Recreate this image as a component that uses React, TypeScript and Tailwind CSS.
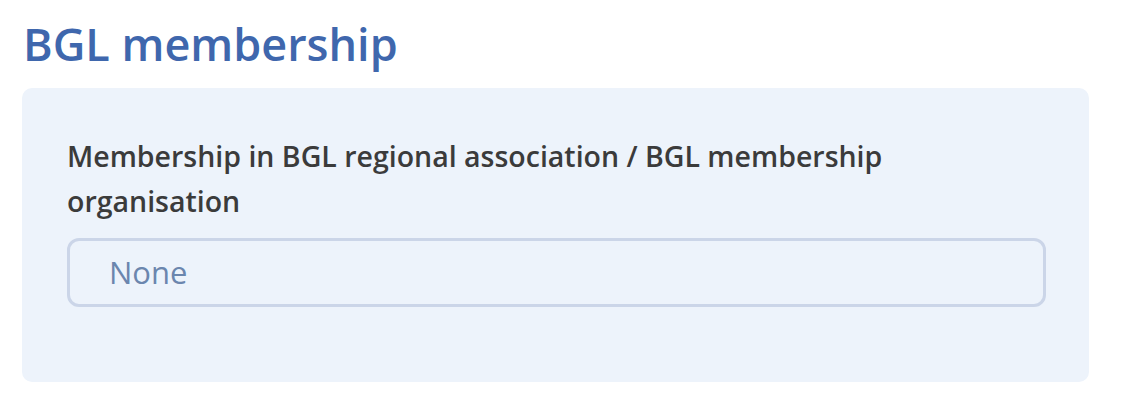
export default function App() {
  return (
    <div className="w-[1130px] h-[416px] bg-white px-[22px] pt-[14px] font-['Open_Sans',sans-serif]">
      <h1 className="text-[45px] leading-[60px] font-semibold text-[#3f67ad] pl-[1px]">BGL membership</h1>
      <div className="mt-[14px] w-[1067px] h-[294px] rounded-[10px] bg-[#edf3fb] pl-[45px] pr-[44px] pt-[46px]">
        <label className="block text-[28.5px] leading-[45px] font-semibold text-[#3b3b3b]">
          Membership in BGL regional association / BGL membership organisation
        </label>
        <div className="mt-[14px] h-[69px] w-[979px] rounded-[12px] border-[3px] border-[#cbd5e8] flex items-center pl-[39px] text-[31px] text-[#6b86ae]">
          None
        </div>
      </div>
    </div>
  )
}
